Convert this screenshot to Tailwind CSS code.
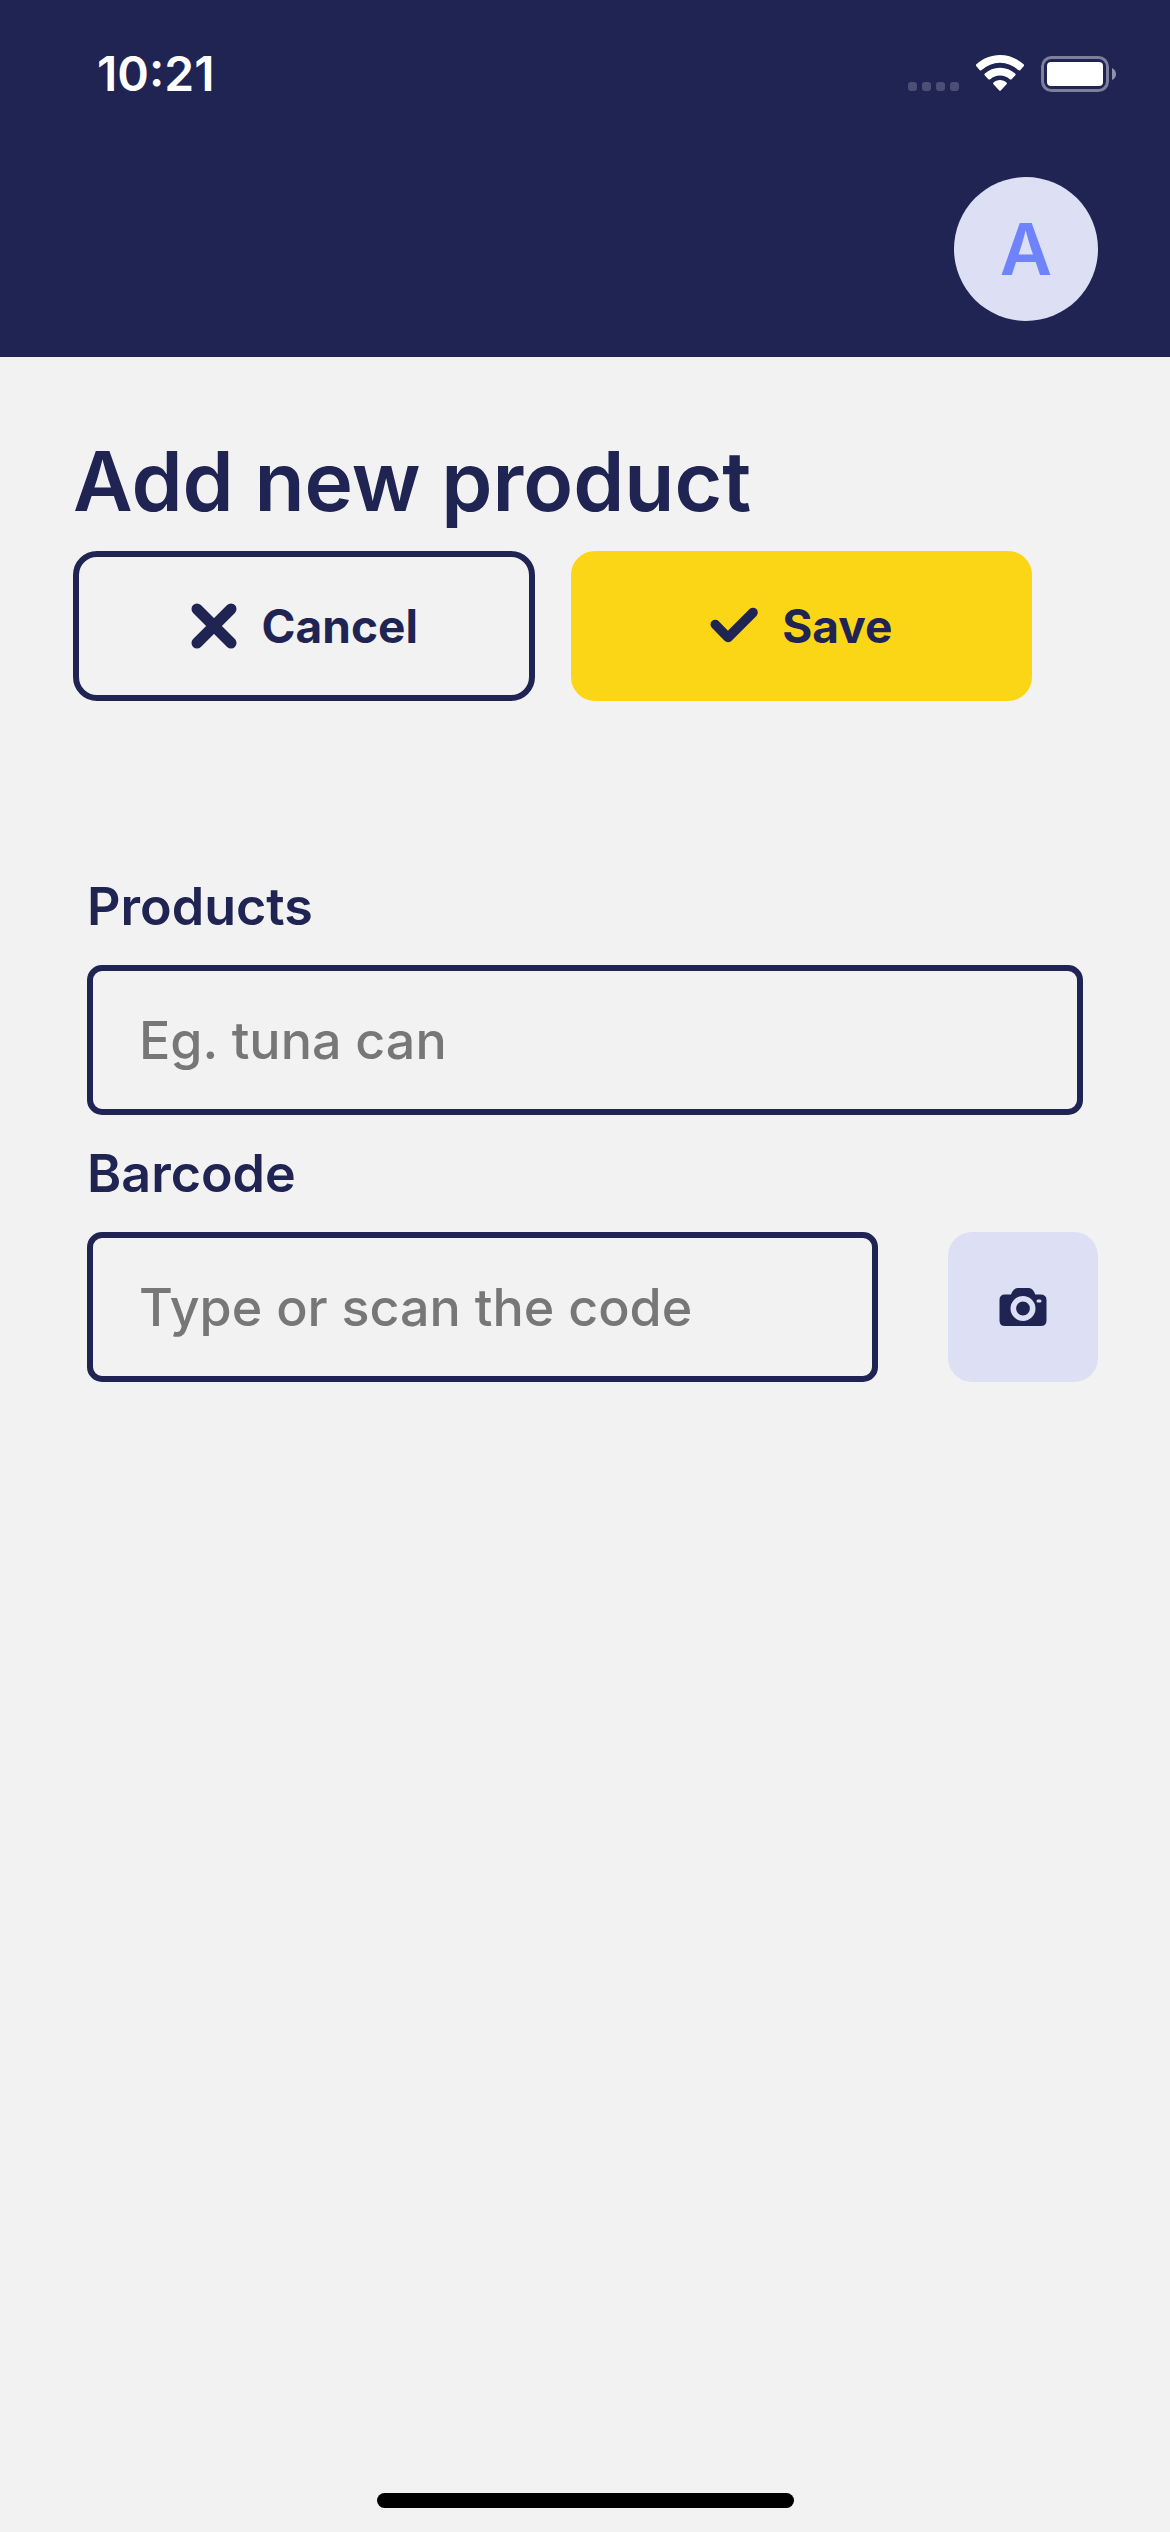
<!DOCTYPE html>
<html lang="en">
<head>
<meta charset="utf-8">
<meta name="viewport" content="width=device-width, initial-scale=1">
<title>Add new product</title>
<script src="https://cdn.jsdelivr.net/npm/@tailwindcss/browser@4"></script>
</head>
<body class="flex min-h-screen flex-col bg-[#f2f2f2] font-['Inter',sans-serif] text-[#202453]">
<header class="bg-[#202453] pb-9">
  <!-- Status bar -->
  <div class="flex h-[141px] items-start justify-between pt-[46px] pr-[54px] pl-[97px]">
    <time class="text-[48px] leading-[56px] font-semibold text-white">10:21</time>
    <div class="flex items-end gap-4 pt-[9px]">
      <svg class="h-[37px] w-[52px]" viewBox="0 0 52 37" fill="#fff" fill-opacity=".2" aria-hidden="true">
        <rect x="0" y="27" width="9" height="9" rx="3"/><rect x="14" y="27" width="9" height="9" rx="3"/><rect x="28" y="27" width="9" height="9" rx="3"/><rect x="42" y="27" width="9" height="9" rx="3"/>
      </svg>
      <svg class="h-[37px] w-12" viewBox="0 0 48 37" fill="#fff" aria-hidden="true">
        <path d="M24 0C33 0 41.500 3.500 47.600 9.300Q48.600 10.300 47.600 11.300L44.200 15.200Q43.300 16 42.300 15.100A26.500 26.500 0 0 0 5.700 15.100Q4.700 16 3.800 15.200L.4 11.300Q-.6 10.300 .4 9.300C6.500 3.500 15 0 24 0Z"/>
        <path d="M24 12.700C30 12.700 35.200 15 39.200 18.600Q40.200 19.600 39.200 20.600L35.600 24.200Q34.700 25 33.700 24.200A14.800 14.800 0 0 0 14.300 24.200Q13.300 25 12.400 24.200L8.800 20.600Q7.800 19.600 8.800 18.600C12.800 15 18 12.700 24 12.700Z"/>
        <path d="M24 25C26.500 25 28.800 25.900 30.500 27.400Q31.400 28.300 30.500 29.300L25 35.200Q24 36.300 23 35.200L17.500 29.300Q16.600 28.300 17.500 27.400C19.200 25.900 21.500 25 24 25Z"/>
      </svg>
      <svg class="h-[37px] w-[76px]" viewBox="0 0 76 37" aria-hidden="true">
        <rect x="2.500" y="2.500" width="65" height="33" rx="9" fill="none" stroke="#fff" stroke-opacity=".42" stroke-width="3"/>
        <rect x="7" y="7" width="56" height="24" rx="4" fill="#fff"/>
        <path d="M72 13Q76 15 76 19T72 25Z" fill="#fff" fill-opacity=".5"/>
      </svg>
    </div>
  </div>
  <div class="flex justify-end pt-9 pr-[72px]">
    <button type="button" aria-label="Account" class="flex size-36 items-center justify-center rounded-full bg-[#dddff5] text-[72px] leading-[88px] font-semibold text-[#7083ff]">A</button>
  </div>
</header>

<main class="pt-[74px] pr-[72px] pl-[73px]">
  <h1 class="text-[82px] leading-[102px] font-semibold">Add new product</h1>
  <div class="mt-[18px] flex gap-9 pr-[66px]">
    <button type="button" class="flex h-[150px] flex-1 items-center justify-center gap-6 rounded-3xl border-6 border-[#202453] text-[46px] leading-[60px] font-bold">
      <svg class="size-12" viewBox="0 0 48 48" fill="none" stroke="currentColor" stroke-width="11" stroke-linecap="round" aria-hidden="true"><path d="M7 7L41 41M41 7L7 41"/></svg>
      Cancel
    </button>
    <button type="button" class="flex h-[150px] flex-1 items-center justify-center gap-6 rounded-3xl border-6 border-[#fbd617] bg-[#fbd617] text-[46px] leading-[60px] font-bold">
      <svg class="size-12" viewBox="0 0 48 48" fill="none" stroke="currentColor" stroke-width="9.600" stroke-linecap="round" stroke-linejoin="round" aria-hidden="true"><path d="M5.300 22.500L18 35.500L43 10.500"/></svg>
      Save
    </button>
  </div>

  <form class="mt-[147px] pl-[14px]">
    <label for="product" class="block pt-[27px] pb-[26px] text-[52px] leading-[64px] font-semibold">Products</label>
    <div class="pr-[15px]">
      <input id="product" type="text" placeholder="Eg. tuna can" class="h-[150px] w-full rounded-[15px] border-6 border-[#202453] bg-transparent px-[46px] text-[52px] font-medium outline-none placeholder:text-[#777777]">
    </div>
    <label for="barcode" class="block pt-[27px] pb-[26px] text-[52px] leading-[64px] font-semibold">Barcode</label>
    <div class="flex gap-[70px]">
      <input id="barcode" type="text" placeholder="Type or scan the code" class="h-[150px] min-w-0 flex-1 rounded-[15px] border-6 border-[#202453] bg-transparent px-[46px] text-[52px] font-medium outline-none placeholder:text-[#777777]">
      <button type="button" aria-label="Scan barcode" class="flex size-[150px] items-center justify-center rounded-3xl bg-[#dddff5]">
        <svg class="size-12" viewBox="0 0 48 48" aria-hidden="true">
          <path fill="currentColor" d="M12 11.500Q14.500 5 18.500 5H30Q34 5 36.200 11.500H41.500Q47.500 11.500 47.500 17V37.500Q47.500 43 41.500 43H6Q.5 43 .5 37.500V17Q.5 11.500 6 11.500Z"/>
          <circle cx="24" cy="25.500" r="9.700" fill="#202453" stroke="#dddff5" stroke-width="5.600"/>
          <rect x="37.500" y="16.500" width="5" height="3" rx="1.500" fill="#dddff5"/>
        </svg>
      </button>
    </div>
  </form>
</main>

<!-- Home indicator -->
<div class="mt-auto flex justify-center pb-6">
  <div class="h-[15px] w-[417px] rounded-full bg-black"></div>
</div>
</body>
</html>
